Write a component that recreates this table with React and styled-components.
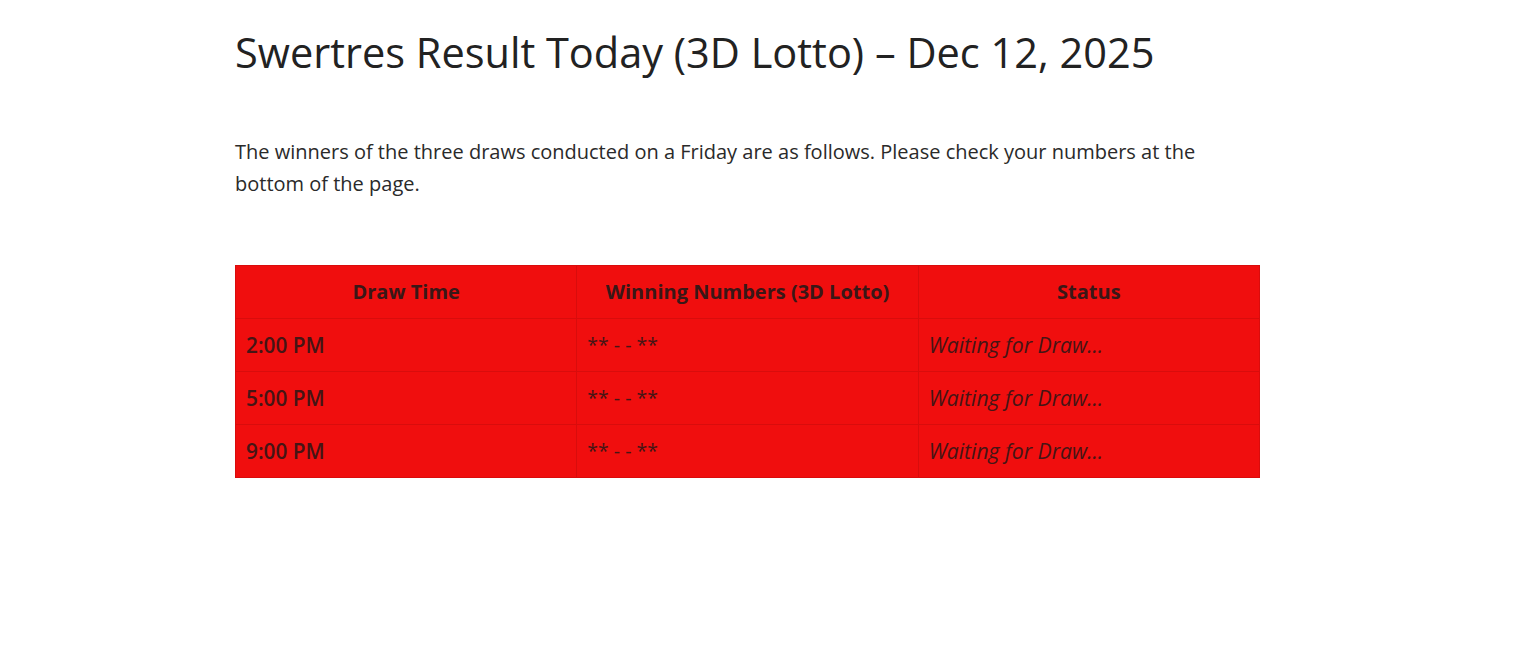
import React from "react";
import styled, { createGlobalStyle } from "styled-components";

const GlobalStyle = createGlobalStyle`
  body {
    margin: 0;
    background: #fff;
    font-family: "Open Sans", "Noto Sans", sans-serif;
    color: #222;
  }
`;

const Wrapper = styled.div`
  width: 1046px;
  margin: 0 auto;
  padding: 28px 0 0 0;
`;

const Title = styled.h1`
  font-size: 41.5px;
  font-weight: 400;
  line-height: 1.2;
  margin: 0 0 58px 0;
  color: #222;
`;

const Intro = styled.p`
  max-width: 1025px;
  font-size: 20px;
  line-height: 32px;
  margin: 0 0 65px 0;
  color: #2a2a2a;
`;

const Table = styled.table`
  width: 1025px;
  border-collapse: collapse;
  table-layout: fixed;
  background: #f00e0e;
`;

const Th = styled.th`
  height: 52px;
  padding: 0 10px;
  font-size: 20px;
  font-weight: 700;
  text-align: center;
  color: #3a1717;
  border: 1px solid #d90c0c;
`;

const Td = styled.td`
  height: 52px;
  padding: 0 10px;
  font-size: ${(props) => props.size || "20px"};
  text-align: left;
  color: #451515;
  border: 1px solid #d90c0c;
  font-weight: ${(props) => (props.strong ? 600 : 400)};
  font-style: ${(props) => (props.italic ? "italic" : "normal")};
`;

const draws = ["2:00 PM", "5:00 PM", "9:00 PM"];

const App = () => {
  return (
    <Wrapper>
      <GlobalStyle />
      <Title>Swertres Result Today (3D Lotto) – Dec 12, 2025</Title>
      <Intro>
        The winners of the three draws conducted on a Friday are as follows.
        Please check your numbers at the bottom of the page.
      </Intro>
      <Table>
        <thead>
          <tr>
            <Th>Draw Time</Th>
            <Th>Winning Numbers (3D Lotto)</Th>
            <Th>Status</Th>
          </tr>
        </thead>
        <tbody>
          {draws.map((time) => (
            <tr key={time}>
              <Td strong size="20.8px">
                {time}
              </Td>
              <Td size="19.5px">** - - **</Td>
              <Td italic size="21.2px">
                Waiting for Draw...
              </Td>
            </tr>
          ))}
        </tbody>
      </Table>
    </Wrapper>
  );
};

export default App;
